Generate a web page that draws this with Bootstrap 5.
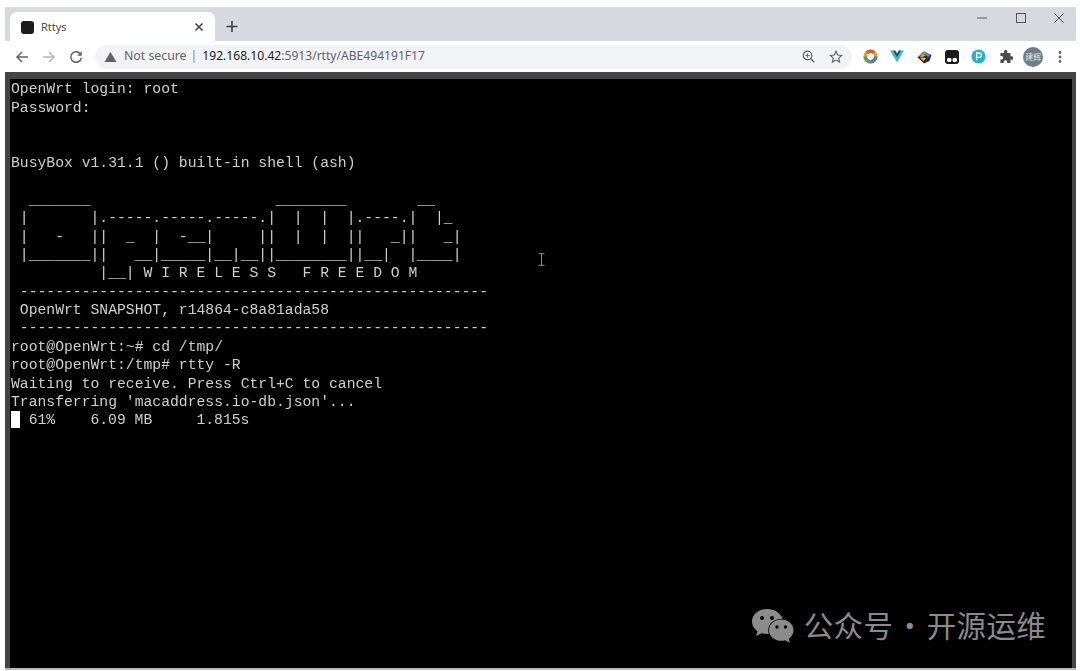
<!DOCTYPE html>
<html lang="en">
<head>
<meta charset="utf-8">
<title>Rttys</title>
<link href="https://cdn.jsdelivr.net/npm/bootstrap@5.3.0/dist/css/bootstrap.min.css" rel="stylesheet">
<style>
html,body{height:100%;background:#fff;overflow:hidden}
body{padding:7px 4px 1px 5px;font-family:"Noto Sans","Open Sans",sans-serif}
.win{height:663px}
.strip{height:34px;background:#d6dae0;padding-left:5px}
.tabx{width:205px;height:29px;background:#fff;border-radius:7px 7px 0 0;padding:1px 11px 0 11px;margin-top:5px;font-size:11px;color:#3c4043}
.fav{width:13px;height:13px;border-radius:3px;background:#1c1c1c;margin-right:7px}
.tabname{font-family:"Open Sans",sans-serif}
.newt{margin-left:4px;margin-top:5px}
.ctl{width:34px}
.ctlwrap{height:34px;gap:4.5px;padding-bottom:12px}
.tool{height:31px;background:#fff;padding-left:3px;padding-right:2px}
.nv{width:27px}
.pill{height:24px;background:#f1f3f4;border-radius:12px;margin:0 4.5px 0 6px;padding:0 9px;font-size:12.3px;color:#5f6368}
.warn{margin-right:7px}
.zoomi{margin-right:14px}
.urlsep{color:#80868b;margin:0 5px 0 4px}
.urltext{font-size:12.1px}
.urlmain{color:#202124}
.ext{width:27.2px}
.ava{width:20px;height:20px;background:#6b7f89;color:#dfe6ea;font-size:8px;line-height:20px;font-family:"Noto Sans CJK SC",sans-serif}
.term-frame{background:#444;padding:7px 4px 0 5px;height:596px}
.term{background:#000;height:100%;padding-left:1px;overflow:hidden}
.term pre{margin:0;padding-top:1.4px;overflow:hidden;font-family:"Liberation Mono",monospace;font-size:14.72px;line-height:18.39px;color:#cfcfcf;filter:blur(.25px)}
.blk{display:inline-block;width:8.8px;height:17px;background:#fff;vertical-align:-4px}
.ibeam{left:528px;top:174px}
.wm{right:26px;bottom:22px;color:#8b8b8b;font-size:29.5px;line-height:36px;font-family:"Noto Sans CJK SC",sans-serif;gap:10px;white-space:pre}
.wmt{letter-spacing:.3px;word-spacing:-5px;margin-bottom:4px}
.edge{height:2px;background:#b9b9b9}
</style>
</head>
<body>
<div class="win d-flex flex-column">
  <div class="strip d-flex align-items-start flex-shrink-0">
    <div class="tabx d-flex align-items-center">
      <span class="fav flex-shrink-0"></span>
      <span class="tabname flex-grow-1">Rttys</span>
      <svg width="10" height="10" viewBox="0 0 10 10"><path d="M1.5 1.5l7 7M8.5 1.5l-7 7" stroke="#3c4043" stroke-width="1.5" fill="none"/></svg>
    </div>
    <svg class="newt" width="26" height="29" viewBox="0 0 26 29"><path d="M13 9v11M7.5 14.5h11" stroke="#3c4043" stroke-width="1.6" fill="none"/></svg>
    <div class="flex-grow-1"></div>
    <div class="ctlwrap d-flex align-items-center">
      <div class="ctl d-flex justify-content-center"><svg width="12" height="12" viewBox="0 0 12 12"><path d="M1 6h10" stroke="#555" stroke-width="1"/></svg></div>
      <div class="ctl d-flex justify-content-center"><svg width="12" height="12" viewBox="0 0 12 12"><rect x="1.5" y="1.5" width="9" height="9" stroke="#555" fill="none"/></svg></div>
      <div class="ctl d-flex justify-content-center"><svg width="12" height="12" viewBox="0 0 12 12"><path d="M1.5 1.5l9 9M10.5 1.5l-9 9" stroke="#555" fill="none"/></svg></div>
    </div>
  </div>
  <div class="tool d-flex align-items-center flex-shrink-0">
    <div class="nv d-flex justify-content-center"><svg width="14" height="14" viewBox="0 0 14 14"><path d="M13 7H2M7 2L2 7l5 5" stroke="#5f6368" stroke-width="1.5" fill="none"/></svg></div>
    <div class="nv d-flex justify-content-center"><svg width="14" height="14" viewBox="0 0 14 14"><path d="M1 7h11M7 2l5 5-5 5" stroke="#b4b7bb" stroke-width="1.5" fill="none"/></svg></div>
    <div class="nv d-flex justify-content-center"><svg width="14" height="14" viewBox="0 0 14 14"><path d="M11.6 4.2A5.3 5.3 0 1 0 12.3 8" stroke="#5f6368" stroke-width="1.5" fill="none"/><path d="M12.8 1.2v4.6H8.2z" fill="#5f6368"/></svg></div>
    <div class="pill flex-grow-1 d-flex align-items-center">
      <svg class="warn" width="13" height="12" viewBox="0 0 13 12"><path d="M6.5 1L12.5 11H.5z" fill="#5f6368"/></svg>
      <span>Not secure</span><span class="urlsep">|</span><span class="urltext"><span class="urlmain">192.168.10.42</span>:5913/rtty/ABE494191F17</span>
      <span class="flex-grow-1"></span>
      <svg class="zoomi" width="13" height="13" viewBox="0 0 13 13"><circle cx="5.5" cy="5.5" r="4.3" stroke="#5f6368" stroke-width="1.2" fill="none"/><path d="M3.5 5.5h4M5.5 3.5v4" stroke="#5f6368"/><path d="M8.6 8.6l3.6 3.6" stroke="#5f6368" stroke-width="1.4"/></svg>
      <svg width="14" height="14" viewBox="0 0 14 14"><path d="M7 1.3l1.7 3.7 4 .4-3 2.7.9 4L7 10.1l-3.6 2 .9-4-3-2.7 4-.4z" stroke="#5f6368" stroke-width="1.2" fill="none"/></svg>
    </div>
    <div class="ext d-flex justify-content-center"><svg width="15" height="15" viewBox="0 0 15 15"><circle cx="7.5" cy="7.5" r="5.2" fill="none" stroke="#e89a2c" stroke-width="3.6"/><path d="M2.3 7.5a5.2 5.2 0 0 0 5.2 5.2" fill="none" stroke="#5f9e5a" stroke-width="3.6"/><path d="M7.5 12.7a5.2 5.2 0 0 0 5.2-5.2" fill="none" stroke="#3f83c9" stroke-width="3.6"/><path d="M4 3.6A5.2 5.2 0 0 1 11 3.6" fill="none" stroke="#d9622b" stroke-width="3.6"/></svg></div>
    <div class="ext d-flex justify-content-center"><svg width="14" height="13" viewBox="0 0 14 13"><path d="M0 .5h4.2L7 5.3 9.8.5H14L7 12.5z" fill="#41b8c8"/><path d="M3 .5h2.2L7 3.6 8.8.5H11L7 7.3z" fill="#26505f"/></svg></div>
    <div class="ext d-flex justify-content-center"><svg width="15" height="14" viewBox="0 0 15 14"><path d="M.5 7.5l6-6 8 3.500-2 6-5.500 2.500-3-3z" fill="#2c3238"/><path d="M2.500 6.500L7.500 1.500l3 2-4.500 3.500z" fill="#e79b2d"/><path d="M7.500 1.500l6 3.200L11.500 7 7 4.500z" fill="#3f8ed0"/><path d="M3 7.500l6 .5-2.500 3z" fill="#e8c25a"/></svg></div>
    <div class="ext d-flex justify-content-center"><svg width="14" height="14" viewBox="0 0 14 14"><rect width="14" height="14" rx="3" fill="#1b1b1b"/><rect x="2" y="8" width="4.4" height="4" rx="1.4" fill="#fff"/><rect x="7.6" y="8" width="4.4" height="4" rx="1.4" fill="#fff"/></svg></div>
    <div class="ext d-flex justify-content-center"><svg width="15" height="15" viewBox="0 0 15 15"><circle cx="7.5" cy="7.5" r="7" fill="#29aed6"/><path d="M5.6 11.3V4h2.6a2.1 2.1 0 0 1 0 4.3H5.6" stroke="#fff" stroke-width="1.3" fill="none"/></svg></div>
    <div class="ext d-flex justify-content-center"><svg width="14" height="14" viewBox="0 0 14 14"><path d="M5 1.2a1.7 1.7 0 0 1 3.3 0V3h3.2v3.2h1a1.8 1.8 0 0 1 0 3.6h-1V13H8.2v-1a1.7 1.7 0 0 0-3.4 0v1H1.4V9.6h1a1.8 1.8 0 0 0 0-3.6h-1V3H5z" fill="#4a4e52"/></svg></div>
    <div class="ext d-flex justify-content-center"><div class="ava rounded-circle text-center">建辉</div></div>
    <div class="ext d-flex justify-content-center"><svg width="4" height="14" viewBox="0 0 4 14"><circle cx="2" cy="2.5" r="1.4" fill="#5f6368"/><circle cx="2" cy="7" r="1.4" fill="#5f6368"/><circle cx="2" cy="11.5" r="1.4" fill="#5f6368"/></svg></div>
  </div>
  <div class="term-frame flex-shrink-0">
    <div class="term position-relative">
<pre>OpenWrt login: root
Password:


BusyBox v1.31.1 () built-in shell (ash)

  _______                     ________        __
 |       |.-----.-----.-----.|  |  |  |.----.|  |_
 |   -   ||  _  |  -__|     ||  |  |  ||   _||   _|
 |_______||   __|_____|__|__||________||__|  |____|
          |__| W I R E L E S S   F R E E D O M
 -----------------------------------------------------
 OpenWrt SNAPSHOT, r14864-c8a81ada58
 -----------------------------------------------------
root@OpenWrt:~# cd /tmp/
root@OpenWrt:/tmp# rtty -R
Waiting to receive. Press Ctrl+C to cancel
Transferring 'macaddress.io-db.json'...
<span class="blk"></span> 61%    6.09 MB     1.815s</pre>
      <svg class="ibeam position-absolute" width="7" height="13" viewBox="0 0 7 13"><path d="M.5.7h6M.5 12.3h6M3.5.7v11.6" stroke="#8f8f8f" fill="none"/></svg>
      <div class="wm position-absolute d-flex align-items-center">
        <svg width="42" height="34" viewBox="0 0 42 34"><path d="M15 0C6.7 0 0 5.6 0 12.6c0 4 2.1 7.5 5.5 9.8L4 27l5.600-2.800c1.700.5 3.500.8 5.400.8.6 0 1.200 0 1.800-.1-.4-1.200-.6-2.400-.6-3.700C16.200 14.900 22.100 9.800 29.500 9.800c.3 0 .7 0 1 0C28.900 4.200 22.600 0 15 0z" fill="#8b8b8b"/><path d="M41.500 21.200c0-6-5.700-10.600-12.300-10.600S17 15.200 17 21.200s5.600 10.600 12.200 10.600c1.400 0 2.800-.2 4.100-.6L38 34l-1.200-4.200c2.900-2.100 4.700-5.100 4.700-8.600z" fill="#8b8b8b"/><circle cx="10" cy="9" r="2" fill="#000"/><circle cx="20" cy="9" r="2" fill="#000"/><circle cx="25" cy="18" r="1.7" fill="#000"/><circle cx="33.5" cy="18" r="1.7" fill="#000"/></svg>
        <span class="wmt">公众号 · 开源运维</span>
      </div>
    </div>
  </div>
  <div class="edge flex-shrink-0"></div>
</div>
</body>
</html>
